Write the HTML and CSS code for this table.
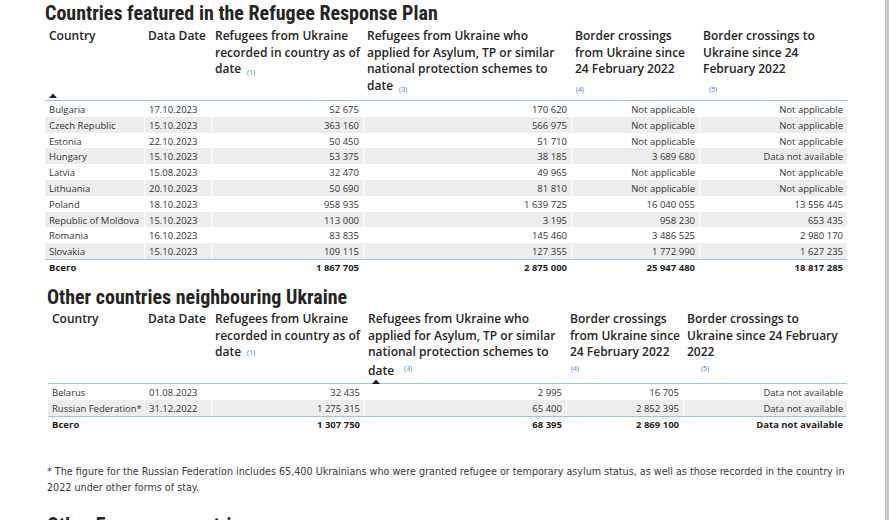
FILE: index.html
```html
<!DOCTYPE html>
<html lang="en">
<head>
<meta charset="utf-8">
<title>Ukraine Refugee Situation</title>
<link rel="stylesheet" href="styles.css">
</head>
<body>
<div class="frame">
<main class="page">
  <h2 class="title">Countries featured in the Refugee Response Plan</h2>
  <div class="table t1">
    <div class="row head">
      <div class="hc"><span class="ht">Country</span><svg class="sort" width="8" height="5" viewBox="0 0 8 5"><polygon points="0,5 4,0.5 8,5" fill="#1f1f1f"/></svg></div>
      <div class="hc"><span class="ht">Data Date</span></div>
      <div class="hc"><span class="ht">Refugees from Ukraine<br>recorded in country as of<br>date<a class="ref ra">(1)</a></span></div>
      <div class="hc"><span class="ht">Refugees from Ukraine who<br>applied for Asylum, TP or similar<br>national protection schemes to<br>date<a class="ref rb">(3)</a></span></div>
      <div class="hc"><span class="ht">Border crossings<br>from Ukraine since<br>24 February 2022<br><a class="ref rc">(4)</a></span></div>
      <div class="hc"><span class="ht">Border crossings to<br>Ukraine since 24<br>February 2022<br><a class="ref rd">(5)</a></span></div>
    </div>
    <div class="row data"><div class="c">Bulgaria</div><div class="c">17.10.2023</div><div class="c num">52 675</div><div class="c num">170 620</div><div class="c num">Not applicable</div><div class="c num">Not applicable</div></div>
    <div class="row data"><div class="c">Czech Republic</div><div class="c">15.10.2023</div><div class="c num">363 160</div><div class="c num">566 975</div><div class="c num">Not applicable</div><div class="c num">Not applicable</div></div>
    <div class="row data"><div class="c">Estonia</div><div class="c">22.10.2023</div><div class="c num">50 450</div><div class="c num">51 710</div><div class="c num">Not applicable</div><div class="c num">Not applicable</div></div>
    <div class="row data"><div class="c">Hungary</div><div class="c">15.10.2023</div><div class="c num">53 375</div><div class="c num">38 185</div><div class="c num">3 689 680</div><div class="c num">Data not available</div></div>
    <div class="row data"><div class="c">Latvia</div><div class="c">15.08.2023</div><div class="c num">32 470</div><div class="c num">49 965</div><div class="c num">Not applicable</div><div class="c num">Not applicable</div></div>
    <div class="row data"><div class="c">Lithuania</div><div class="c">20.10.2023</div><div class="c num">50 690</div><div class="c num">81 810</div><div class="c num">Not applicable</div><div class="c num">Not applicable</div></div>
    <div class="row data"><div class="c">Poland</div><div class="c">18.10.2023</div><div class="c num">958 935</div><div class="c num">1 639 725</div><div class="c num">16 040 055</div><div class="c num">13 556 445</div></div>
    <div class="row data"><div class="c">Republic of Moldova</div><div class="c">15.10.2023</div><div class="c num">113 000</div><div class="c num">3 195</div><div class="c num">958 230</div><div class="c num">653 435</div></div>
    <div class="row data"><div class="c">Romania</div><div class="c">16.10.2023</div><div class="c num">83 835</div><div class="c num">145 460</div><div class="c num">3 486 525</div><div class="c num">2 980 170</div></div>
    <div class="row data"><div class="c">Slovakia</div><div class="c">15.10.2023</div><div class="c num">109 115</div><div class="c num">127 355</div><div class="c num">1 772 990</div><div class="c num">1 627 235</div></div>
    <div class="row total"><div class="c">Всего</div><div class="c"></div><div class="c num">1 867 705</div><div class="c num">2 875 000</div><div class="c num">25 947 480</div><div class="c num">18 817 285</div></div>
  </div>

  <h2 class="title title2">Other countries neighbouring Ukraine</h2>
  <div class="table t2">
    <div class="row head">
      <div class="hc"><span class="ht">Country</span></div>
      <div class="hc"><span class="ht">Data Date</span></div>
      <div class="hc"><span class="ht">Refugees from Ukraine<br>recorded in country as of<br>date<a class="ref re">(1)</a></span></div>
      <div class="hc"><span class="ht">Refugees from Ukraine who<br>applied for Asylum, TP or similar<br>national protection schemes to<br>date<a class="ref rf">(3)</a></span><svg class="sort" width="8" height="5" viewBox="0 0 8 5"><polygon points="0,5 4,0.5 8,5" fill="#1f1f1f"/></svg></div>
      <div class="hc"><span class="ht">Border crossings<br>from Ukraine since<br>24 February 2022<br><a class="ref rg">(4)</a></span></div>
      <div class="hc"><span class="ht">Border crossings to<br>Ukraine since 24 February<br>2022<br><a class="ref rh">(5)</a></span></div>
    </div>
    <div class="row data"><div class="c">Belarus</div><div class="c">01.08.2023</div><div class="c num">32 435</div><div class="c num">2 995</div><div class="c num">16 705</div><div class="c num">Data not available</div></div>
    <div class="row data"><div class="c">Russian Federation*</div><div class="c">31.12.2022</div><div class="c num">1 275 315</div><div class="c num">65 400</div><div class="c num">2 852 395</div><div class="c num">Data not available</div></div>
    <div class="row total"><div class="c">Всего</div><div class="c"></div><div class="c num">1 307 750</div><div class="c num">68 395</div><div class="c num">2 869 100</div><div class="c num">Data not available</div></div>
  </div>

  <p class="note">* The figure for the Russian Federation includes 65,400 Ukrainians who were granted refugee or temporary asylum status, as well as those recorded in the country in<br>2022 under other forms of stay.</p>

  <h2 class="title title3">Other European countries</h2>
</main>
<div class="scrollbar"></div>
</div>
</body>
</html>
```

FILE: styles.css
```css
* { box-sizing: border-box; }
html, body { margin: 0; padding: 0; background: #fff; }
body { width: 889px; height: 520px; overflow: hidden; }

.frame { display: flex; height: 520px; overflow: hidden; }
.page { flex: 1; padding-left: 45px; color: #252423; }
.scrollbar { width: 4px; margin-left: auto; background: #c8c8c8; }

.title {
  margin: 0;
  padding-top: 1px;
  height: 27px;
  font-family: "Liberation Sans Narrow", "Roboto Condensed", "DejaVu Sans Condensed", sans-serif;
  font-weight: 700;
  font-size: 20px;
  line-height: 24px;
  color: #252423;
}
.title2 { margin: 8px 0 0 2px; height: 26px; }
.title3 { margin: 16px 0 0 2px; }

.table { width: 802px; }
.t2 { margin-left: 3px; width: 799px; }
.row { display: grid; }
.t1 .row { grid-template-columns: 99px 67px 152px 208px 128px 148px; }
.t2 .row { grid-template-columns: 96px 67px 153px 202px 117px 164px; }

.head { height: 74px; border-bottom: 1px solid #9cc3e6; }
.hc {
  display: flex;
  flex-direction: column;
  padding: 1px 4px 0;
  font-family: "Open Sans", sans-serif;
  font-weight: 600;
  font-size: 12px;
  line-height: 16.6px;
  color: #252423;
  white-space: nowrap;
}
.ht { display: block; }
.sort { display: block; margin-top: auto; margin-bottom: 2px; }
.t2 .sort { margin-left: 4px; margin-bottom: 1px; }

.ref {
  font-size: 7px;
  color: #3b7ad8;
  font-weight: 400;
  margin-left: 6px;
  vertical-align: -2px;
}
.rc { margin-left: 1px; }
.rd { margin-left: 6px; }
.re { margin-left: 6px; vertical-align: 1px; }
.rf { margin-left: 10px; vertical-align: 4px; }
.rg { margin-left: 1px; vertical-align: 3px; }
.rh { margin-left: 14px; vertical-align: 3px; }

.data { height: 15.8px; }
.c {
  padding: 3px 4px 0;
  font-family: "Open Sans", sans-serif;
  font-size: 9.5px;
  line-height: 12.8px;
  color: #333;
  white-space: nowrap;
  overflow: hidden;
}
.c + .c { border-left: 1px solid #fff; }
.num { text-align: right; }
.data:nth-child(odd) .c { background: #eeeded; }

.total { height: 17px; border-top: 1px solid #9cc3e6; }
.total .c { font-weight: 700; color: #1f1f1f; padding-top: 2px; }

.note {
  margin: 31px 0 0 2px;
  font-family: "DejaVu Sans Condensed", sans-serif;
  font-size: 10.7px;
  line-height: 16px;
  color: #3a3a3a;
  white-space: nowrap;
}
```
